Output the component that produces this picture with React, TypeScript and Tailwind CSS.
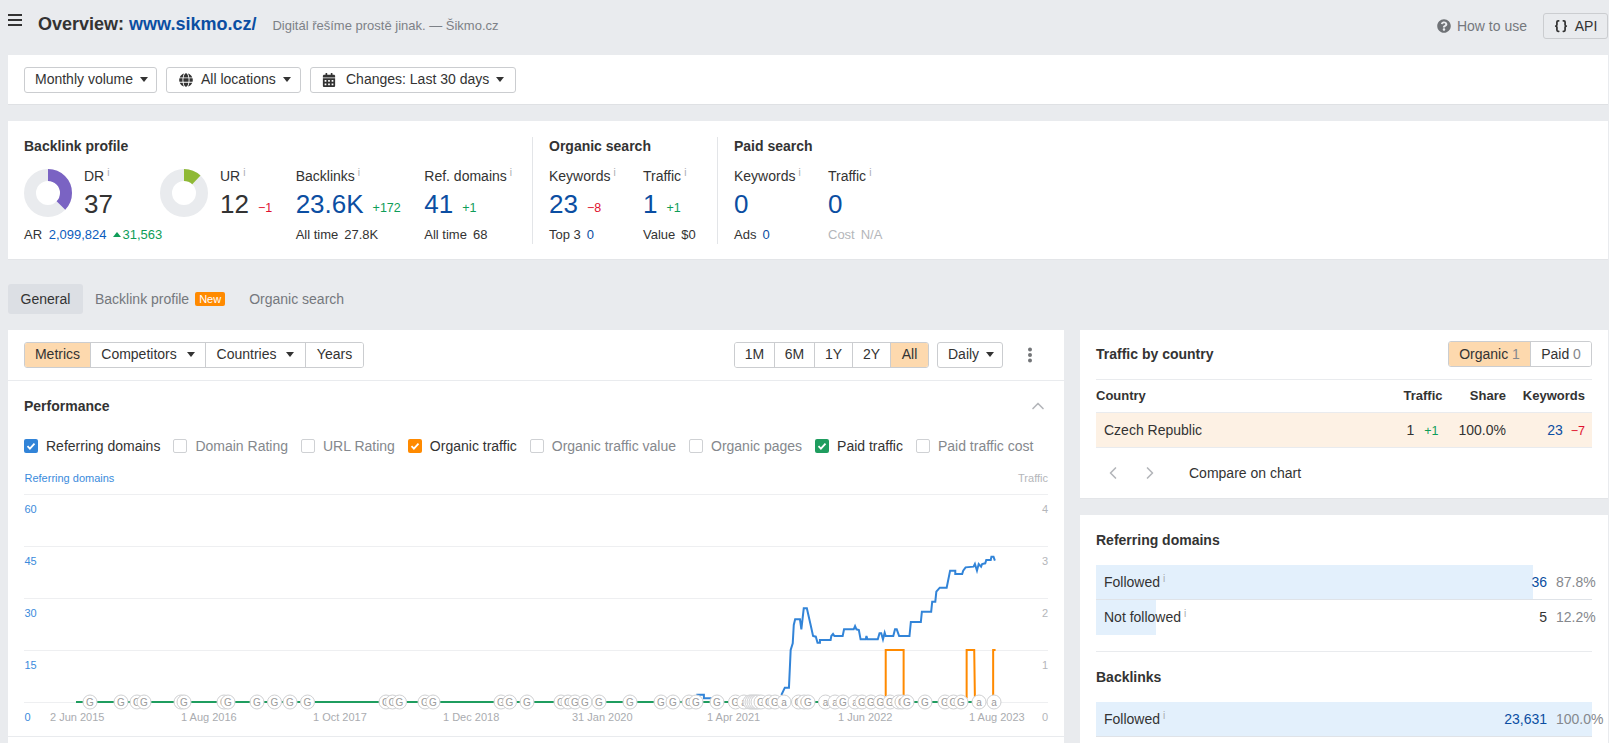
import { ChevronLeft, ChevronRight, ChevronUp, Braces } from "lucide-react";
import { FaCalendarAlt, FaGlobe, FaQuestionCircle } from "react-icons/fa";
import type { ReactNode } from "react";

const BLUE = "text-[#0b4ea2]";

function Caret() {
  return (
    <svg width="8" height="5" viewBox="0 0 8 5" className="shrink-0">
      <path d="M0 0h8L4 5z" fill="#333" />
    </svg>
  );
}

function Info() {
  return <sup className="ml-[3px] text-[10px] text-[#a9acb0]">i</sup>;
}

function Donut({ pct, color }: { pct: number; color: string }) {
  const c = 2 * Math.PI * 18;
  return (
    <svg width="48" height="48" viewBox="0 0 48 48" className="shrink-0">
      <circle cx="24" cy="24" r="18" fill="none" stroke="#e9ebee" strokeWidth="12" />
      <circle
        cx="24"
        cy="24"
        r="18"
        fill="none"
        stroke={color}
        strokeWidth="12"
        strokeDasharray={`${(c * pct) / 100} ${c}`}
        transform="rotate(-90 24 24)"
      />
    </svg>
  );
}

function Delta({ v, up }: { v: string; up: boolean }) {
  return <span className={`text-[12.5px] ${up ? "text-[#0f9d58]" : "text-[#e0102f]"}`}>{v}</span>;
}

function Metric({
  label,
  value,
  delta,
  up,
  sub,
  subVal,
  muted,
  className,
}: {
  label: string;
  value: string;
  delta?: string;
  up?: boolean;
  sub?: string;
  subVal?: string;
  muted?: boolean;
  className: string;
}) {
  return (
    <div className={className}>
      <div className="h-[18px] leading-[18px] whitespace-nowrap">
        {label}
        <Info />
      </div>
      <div className="mt-[3px] h-[32px] flex items-center gap-[9px] whitespace-nowrap">
        <span className={`text-[26px] ${BLUE}`}>{value}</span>
        {delta && <span className="pt-[6px]"><Delta v={delta} up={!!up} /></span>}
      </div>
      <div className={`mt-[6px] h-[18px] leading-[18px] text-[13px] whitespace-nowrap ${muted ? "text-[#b4b6ba]" : ""}`}>
        {sub}
        <span className={`ml-[6px] ${muted ? "" : subVal === "0" ? BLUE : ""}`}>{subVal}</span>
      </div>
    </div>
  );
}

function RatingBlock({
  pct,
  color,
  label,
  value,
  delta,
  className,
  children,
}: {
  pct: number;
  color: string;
  label: string;
  value: string;
  delta?: string;
  className: string;
  children?: ReactNode;
}) {
  return (
    <div className={className}>
      <div className="flex h-[53px]">
        <div className="pt-[2px]">
          <Donut pct={pct} color={color} />
        </div>
        <div className="ml-[12px]">
          <div className="h-[18px] leading-[18px]">
            {label}
            <Info />
          </div>
          <div className="mt-[3px] h-[32px] flex items-center gap-[9px] whitespace-nowrap">
            <span className="text-[26px] text-[#333]">{value}</span>
            {delta && <span className="pt-[6px]"><Delta v={delta} up={false} /></span>}
          </div>
        </div>
      </div>
      <div className="mt-[6px] h-[18px] leading-[18px] text-[13px] whitespace-nowrap">{children}</div>
    </div>
  );
}

function DropBtn({ children, className }: { children: ReactNode; className: string }) {
  return (
    <div className={`h-[26px] flex items-center gap-[7px] border border-[#cbcdd0] rounded-[3px] bg-white ${className}`}>
      {children}
    </div>
  );
}

function Segments({ items }: { items: { label: ReactNode; w: string; on?: boolean }[] }) {
  return (
    <div className="flex h-[26px] border border-[#cbcdd0] rounded-[3px] overflow-hidden divide-x divide-[#cbcdd0]">
      {items.map((it, i) => (
        <div key={i} className={`flex items-center justify-center gap-[10px] ${it.w} ${it.on ? "bg-[#fdd9ae]" : "bg-white"}`}>
          {it.label}
        </div>
      ))}
    </div>
  );
}

function Check({ label, color }: { label: string; color?: string }) {
  return (
    <div className="flex items-center gap-[8px] whitespace-nowrap">
      {color ? (
        <svg width="14" height="14" viewBox="0 0 14 14" className="shrink-0">
          <rect width="14" height="14" rx="2" fill={color} />
          <path d="M3.5 7.2l2.4 2.4 4.6-5" fill="none" stroke="#fff" strokeWidth="1.8" />
        </svg>
      ) : (
        <span className="w-[14px] h-[14px] shrink-0 rounded-[2px] border border-[#cfd1d4] bg-white" />
      )}
      <span className={color ? "text-[#333]" : "text-[#85888d]"}>{label}</span>
    </div>
  );
}

// blue / orange traces, read off the chart as [x, y] in page pixels after the map below
const toPage = (pts: number[][]) => pts.map(([x, y]) => `${530 + x / 2.904},${540 + y / 3}`).join(" ");

const blue1 = [[483, 464], [505, 464], [505, 475], [530, 475]];
const blue2 = [
  [730, 465], [740, 443], [752, 443], [757, 330], [763, 310], [766, 255], [770, 238], [784, 238], [788, 268],
  [795, 205], [804, 205], [815, 255], [822, 288], [830, 290], [835, 308], [842, 308], [842, 300], [873, 300],
  [875, 288], [880, 282], [884, 288], [908, 288], [912, 268], [940, 268], [944, 258], [948, 268], [955, 270],
  [960, 298], [975, 298], [977, 288], [980, 298], [1010, 298], [1015, 280], [1020, 280], [1025, 298], [1030, 278],
  [1033, 288], [1055, 288], [1060, 268], [1065, 268], [1072, 288], [1102, 288], [1106, 246], [1135, 246],
  [1138, 215], [1165, 215], [1168, 185], [1177, 185], [1180, 155], [1190, 143], [1210, 143], [1220, 92], [1235, 92],
  [1235, 102], [1255, 102], [1258, 92], [1265, 82], [1288, 80], [1292, 72], [1298, 92], [1303, 72], [1310, 80],
  [1313, 72], [1322, 70], [1325, 60], [1338, 60], [1340, 50], [1346, 50], [1350, 62],
];
const orange = [
  [[1033, 468], [1033, 330], [1085, 330], [1085, 468]],
  [[1268, 475], [1268, 330], [1290, 330], [1292, 475]],
  [[1345, 468], [1345, 330], [1352, 330]],
];

const markers: [number, string][] = [
  [90, "G"], [121, "G"], [137, "G"], [144, "G"], [181, "G"], [184, "G"], [224, "G"], [228, "G"], [257, "G"], [274.5, "G"],
  [290, "G"], [307.5, "G"], [386, "G"], [392.5, "G"], [399.5, "G"], [425, "G"], [433, "G"], [501, "G"], [509.5, "G"],
  [527, "G"], [561, "G"], [568, "G"], [575, "G"], [585, "G"], [599, "G"], [630, "G"], [661, "G"], [673, "G"], [689, "G"],
  [696, "G"], [717, "G"], [735.5, "G"], [744, "a"], [750, "G"], [752, "G"], [754, "G"], [756, "G"], [758, "G"], [761, "G"],
  [769, "G"], [775, "G"], [784, "a"], [798.5, "G"], [804, "G"], [808, "G"], [825.5, "a"], [835, "a"], [843, "G"], [855, "a"],
  [862, "G"], [871, "G"], [880.5, "G"], [890, "G"], [898.5, "G"], [902, "G"], [907, "G"], [925, "G"], [945, "G"], [953.5, "G"],
  [961, "G"], [979, "a"], [994, "a"],
];

const gridY = [494, 546, 598, 650, 702];
const leftAxis = ["60", "45", "30", "15", "0"];
const rightAxis = ["4", "3", "2", "1", "0"];
const dates: [number, string][] = [
  [50, "2 Jun 2015"], [181, "1 Aug 2016"], [313, "1 Oct 2017"], [443, "1 Dec 2018"],
  [572, "31 Jan 2020"], [707, "1 Apr 2021"], [838, "1 Jun 2022"], [969, "1 Aug 2023"],
];

function Chart() {
  return (
    <svg width="1056" height="267" viewBox="8 470 1056 267" className="block" fontFamily="'Liberation Sans', sans-serif">
      <text x="24.5" y="482" fontSize="11" fill="#3b8bdc">Referring domains</text>
      <text x="1048" y="482" fontSize="11" fill="#b4b6ba" textAnchor="end">Traffic</text>
      {gridY.map((y, i) => (
        <line key={y} x1="24" x2="1048" y1={y + 0.5} y2={y + 0.5} stroke="#eeeff1" strokeWidth="1" />
      ))}
      {leftAxis.map((t, i) => (
        <text key={t} x="24.5" y={gridY[i] + 19} fontSize="11" fill="#3b8bdc">{t}</text>
      ))}
      {rightAxis.map((t, i) => (
        <text key={t} x="1048" y={gridY[i] + 19} fontSize="11" fill="#b4b6ba" textAnchor="end">{t}</text>
      ))}
      {dates.map(([x, t]) => (
        <text key={t} x={x} y="721" fontSize="11" fill="#aaacb0">{t}</text>
      ))}
      <line x1="76" x2="972" y1="702" y2="702" stroke="#1f9d5f" strokeWidth="2" />
      <polyline points={toPage(blue1)} fill="none" stroke="#3284d8" strokeWidth="2" />
      <polyline points={toPage(blue2)} fill="none" stroke="#3284d8" strokeWidth="2" />
      {orange.map((o, i) => (
        <polyline key={i} points={toPage(o)} fill="none" stroke="#ff8a00" strokeWidth="2" />
      ))}
      {markers.map(([x, t], i) => (
        <g key={i}>
          <circle cx={x} cy="702" r="7" fill="#fff" stroke="#cfd0d2" strokeWidth="1" />
          <text x={x} y="705.5" fontSize="10" fill="#9a9a9a" textAnchor="middle">{t}</text>
        </g>
      ))}
      <line x1="8" x2="1064" y1="736.5" y2="736.5" stroke="#e9ebee" strokeWidth="1" />
    </svg>
  );
}

function BarRow({ label, num, pct, width, numBlue, border }: { label: string; num: string; pct: string; width: number; numBlue?: boolean; border?: boolean }) {
  return (
    <div className={`relative h-[35px] flex items-center ${border ? "border-b border-[#dfe3e8]" : ""}`}>
      <div className="absolute left-0 top-0 bottom-0 bg-[#e3f0fc]" style={{ width: `${width}%` }} />
      <div className="relative flex-1 flex items-center pl-2">
        <span className="flex-1">
          {label}
          <Info />
        </span>
        <span className={numBlue ? BLUE : ""}>{num}</span>
        <span className="ml-[9px] w-[36px] whitespace-nowrap text-[#85888d]">{pct}</span>
      </div>
    </div>
  );
}

export default function App() {
  return (
    <div className="h-screen overflow-hidden bg-[#e9ebee] pl-2 pr-px text-[14px] text-[#333] font-['Liberation_Sans',Arial,sans-serif]">
      <header className="h-[55px] flex items-start">
        <svg width="14" height="12" viewBox="0 0 14 12" className="mt-[14px] shrink-0">
          <path d="M0 0h14v2H0zM0 5h14v2H0zM0 10h14v2H0z" fill="#333" />
        </svg>
        <h1 className="ml-[16px] mt-[13px] text-[18px] leading-[22px] font-bold whitespace-nowrap">
          Overview: <span className={BLUE}>www.sikmo.cz/</span>
        </h1>
        <span className="ml-[16px] mt-[17px] text-[13px] leading-[18px] text-[#7d8187] whitespace-nowrap">
          Digitál řešíme prostě jinak. — Šikmo.cz
        </span>
        <div className="ml-auto mt-[13px] flex items-center h-[26px]">
          <FaQuestionCircle className="text-[#6f7276]" size={14} />
          <span className="ml-[6px] text-[#75787d]">How to use</span>
          <div className="ml-[16px] w-[65px] h-[26px] flex items-center justify-center gap-[7px] border border-[#cbcdd0] rounded-[3px]">
            <Braces size={14} strokeWidth={3} />
            <span>API</span>
          </div>
        </div>
      </header>

      <section className="h-[50px] bg-white border-b border-[#dfe1e4] flex items-center gap-[9px] pl-4">
        <DropBtn className="w-[133px] pl-[10px]">
          Monthly volume <Caret />
        </DropBtn>
        <DropBtn className="w-[135px] pl-[12px]">
          <FaGlobe className="text-[#333]" size={14} />
          <span className="ml-[1px]">All locations</span>
          <Caret />
        </DropBtn>
        <DropBtn className="w-[206px] pl-[11px]">
          <FaCalendarAlt className="text-[#333]" size={14} />
          <span className="ml-[3px]">Changes: Last 30 days</span>
          <Caret />
        </DropBtn>
      </section>

      <section className="mt-4 h-[139px] bg-white border-b border-[#e3e5e8] pt-4 pl-4 flex">
        <div className="w-[509px] h-[107px] border-r border-[#e3e5e8]">
          <div className="h-[18px] leading-[18px] font-bold">Backlink profile</div>
          <div className="mt-[12px] flex">
            <RatingBlock pct={37} color="#7a63c3" label="DR" value="37" className="w-[136px]">
              AR <span className="ml-[3px] text-[#0b5cbd]">2,099,824</span>
              <svg width="8" height="5" viewBox="0 0 8 5" className="inline ml-[6px] mr-[2px] align-[2px]">
                <path d="M0 5h8L4 0z" fill="#0f9d58" />
              </svg>
              <span className="text-[#0f9d58]">31,563</span>
            </RatingBlock>
            <RatingBlock pct={12} color="#8fb935" label="UR" value="12" delta="−1" className="w-[136px]" />
            <Metric label="Backlinks" value="23.6K" delta="+172" up sub="All time" subVal="27.8K" className="w-[129px]" />
            <Metric label="Ref. domains" value="41" delta="+1" up sub="All time" subVal="68" className="w-[108px]" />
          </div>
        </div>
        <div className="w-[185px] h-[107px] border-r border-[#e3e5e8] pl-4">
          <div className="h-[18px] leading-[18px] font-bold">Organic search</div>
          <div className="mt-[12px] flex">
            <Metric label="Keywords" value="23" delta="−8" sub="Top 3" subVal="0" className="w-[94px]" />
            <Metric label="Traffic" value="1" delta="+1" up sub="Value" subVal="$0" className="w-[70px]" />
          </div>
        </div>
        <div className="pl-4">
          <div className="h-[18px] leading-[18px] font-bold">Paid search</div>
          <div className="mt-[12px] flex">
            <Metric label="Keywords" value="0" sub="Ads" subVal="0" className="w-[94px]" />
            <Metric label="Traffic" value="0" sub="Cost" subVal="N/A" muted className="w-[70px]" />
          </div>
        </div>
      </section>

      <nav className="mt-6 h-[30px] flex items-center">
        <div className="w-[75px] h-[30px] flex items-center justify-center rounded-[3px] bg-[#dcdfe4]">General</div>
        <span className="ml-3 text-[#75787d]">Backlink profile</span>
        <span className="ml-[6px] h-[14px] px-[4px] flex items-center rounded-[2px] bg-[#ff8a00] text-white text-[11px]">New</span>
        <span className="ml-6 text-[#75787d]">Organic search</span>
      </nav>

      <div className="mt-4 flex gap-4 items-start">
        <main className="w-[1056px] shrink-0 bg-white">
          <div className="h-[51px] border-b border-[#e9ebee] flex items-center pl-4 pb-[1px]">
            <Segments
              items={[
                { label: "Metrics", w: "w-[66px]", on: true },
                { label: <>Competitors <Caret /></>, w: "w-[115px]" },
                { label: <>Countries <Caret /></>, w: "w-[100px]" },
                { label: "Years", w: "w-[57px]" },
              ]}
            />
            <div className="ml-auto">
              <Segments
                items={[
                  { label: "1M", w: "w-[40px]" },
                  { label: "6M", w: "w-[40px]" },
                  { label: "1Y", w: "w-[38px]" },
                  { label: "2Y", w: "w-[38px]" },
                  { label: "All", w: "w-[37px]", on: true },
                ]}
              />
            </div>
            <DropBtn className="ml-[8px] w-[66px] pl-[10px]">
              Daily <Caret />
            </DropBtn>
            <svg width="6" height="16" viewBox="0 0 6 16" className="ml-[24px] mr-[31px]">
              <circle cx="3" cy="2.5" r="2" fill="#737578" />
              <circle cx="3" cy="8" r="2" fill="#737578" />
              <circle cx="3" cy="13.5" r="2" fill="#737578" />
            </svg>
          </div>
          <div className="mt-4 h-[18px] flex items-center justify-between pl-4 pr-[16px]">
            <span className="font-bold">Performance</span>
            <ChevronUp size={20} className="text-[#b4b6ba]" />
          </div>
          <div className="mt-[22px] h-[18px] flex items-center gap-[13px] pl-4">
            <Check label="Referring domains" color="#3284d8" />
            <Check label="Domain Rating" />
            <Check label="URL Rating" />
            <Check label="Organic traffic" color="#ff8a00" />
            <Check label="Organic traffic value" />
            <Check label="Organic pages" />
            <Check label="Paid traffic" color="#1f9d5f" />
            <Check label="Paid traffic cost" />
          </div>
          <div className="mt-[15px]">
            <Chart />
          </div>
          <div className="h-[10px]" />
        </main>

        <aside className="flex-1 flex flex-col gap-4">
          <section className="h-[169px] bg-white border-b border-[#e3e5e8] px-4">
            <div className="h-[50px] border-b border-[#e9ebee] flex items-center justify-between pb-[1px]">
              <span className="font-bold">Traffic by country</span>
              <Segments
                items={[
                  { label: <span>Organic <span className="text-[#85888d]">1</span></span>, w: "w-[82px]", on: true },
                  { label: <span>Paid <span className="text-[#85888d]">0</span></span>, w: "w-[60px]" },
                ]}
              />
            </div>
            <div className="h-[33px] grid grid-cols-[1fr_63.5px_79px_7px] items-center font-bold text-[13px] border-b border-[#e9ebee]">
              <span className="flex justify-between pr-0">
                Country <span>Traffic</span>
              </span>
              <span className="text-right">Share</span>
              <span className="text-right">Keywords</span>
            </div>
            <div className="h-[35px] grid grid-cols-[1fr_63.5px_79px_7px] items-center bg-[#fdf1e4] border-b border-[#e9ebee]">
              <span className="flex justify-between pl-2 pr-[4px]">
                Czech Republic
                <span>
                  1 <span className="ml-[6px] text-[12.5px] text-[#0f9d58]">+1</span>
                </span>
              </span>
              <span className="text-right">100.0%</span>
              <span className="text-right">
                <span className={BLUE}>23</span>
                <span className="ml-[8px] text-[12.5px] text-[#e0102f]">−7</span>
              </span>
            </div>
            <div className="h-[50px] flex items-center">
              <ChevronLeft size={20} className="ml-[7px] text-[#b4b6ba]" />
              <ChevronRight size={20} className="ml-[17px] text-[#b4b6ba]" />
              <span className="ml-[29px]">Compare on chart</span>
            </div>
          </section>

          <section className="bg-white px-4 pb-4">
            <div className="pt-4 h-[50px] font-bold leading-[18px]">Referring domains</div>
            <BarRow label="Followed" num="36" pct="87.8%" width={88.1} numBlue border />
            <BarRow label="Not followed" num="5" pct="12.2%" width={12.1} />
            <div className="mt-4 border-b border-[#e9ebee]" />
            <div className="pt-4 h-[50px] font-bold leading-[18px]">Backlinks</div>
            <BarRow label="Followed" num="23,631" pct="100.0%" width={100} numBlue border />
          </section>
        </aside>
      </div>
    </div>
  );
}
